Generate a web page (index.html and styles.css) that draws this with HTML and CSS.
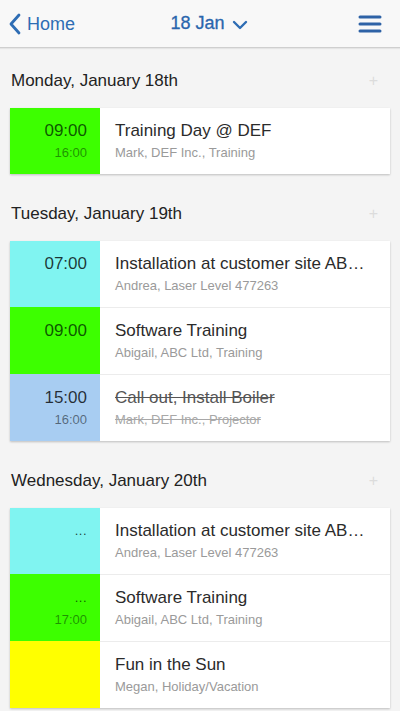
FILE: index.html
```html
<!DOCTYPE html>
<html>
<head>
<meta charset="utf-8">
<link rel="stylesheet" href="styles.css">
</head>
<body>
<header class="topbar">
  <div class="back">
    <svg class="back-icon" width="14" height="24" viewBox="0 0 14 24"><path d="M11 3 L3 12 L11 21" fill="none" stroke="#2e6db4" stroke-width="2.8" stroke-linecap="round" stroke-linejoin="round"/></svg>
    <span>Home</span>
  </div>
  <div class="title">
    <span>18 Jan</span>
    <svg class="down-icon" width="16" height="10" viewBox="0 0 16 10"><path d="M2 2 L8 8 L14 2" fill="none" stroke="#2e6db4" stroke-width="2.4" stroke-linecap="round" stroke-linejoin="round"/></svg>
  </div>
  <div class="menu">
    <svg width="24" height="18" viewBox="0 0 24 18"><g stroke="#2e62a6" stroke-width="3" stroke-linecap="round"><line x1="2" y1="2" x2="22" y2="2"/><line x1="2" y1="9" x2="22" y2="9"/><line x1="2" y1="16" x2="22" y2="16"/></g></svg>
  </div>
</header>

<main class="list">
  <section class="day">
    <div class="day-head"><span>Monday, January 18th</span><span class="plus">+</span></div>
    <div class="card">
      <div class="row">
        <div class="time green"><div class="start">09:00</div><div class="end">16:00</div></div>
        <div class="info"><div class="name">Training Day @ DEF</div><div class="sub">Mark, DEF Inc., Training</div></div>
      </div>
    </div>
  </section>

  <section class="day">
    <div class="day-head"><span>Tuesday, January 19th</span><span class="plus">+</span></div>
    <div class="card">
      <div class="row">
        <div class="time cyan"><div class="start">07:00</div><div class="end"></div></div>
        <div class="info"><div class="name">Installation at customer site AB…</div><div class="sub">Andrea, Laser Level 477263</div></div>
      </div>
      <div class="row">
        <div class="time green"><div class="start">09:00</div><div class="end"></div></div>
        <div class="info"><div class="name">Software Training</div><div class="sub">Abigail, ABC Ltd, Training</div></div>
      </div>
      <div class="row done">
        <div class="time blue"><div class="start">15:00</div><div class="end">16:00</div></div>
        <div class="info"><div class="name">Call out, Install Boiler</div><div class="sub">Mark, DEF Inc., Projector</div></div>
      </div>
    </div>
  </section>

  <section class="day">
    <div class="day-head"><span>Wednesday, January 20th</span><span class="plus">+</span></div>
    <div class="card">
      <div class="row">
        <div class="time cyan"><div class="start dots">...</div><div class="end"></div></div>
        <div class="info"><div class="name">Installation at customer site AB…</div><div class="sub">Andrea, Laser Level 477263</div></div>
      </div>
      <div class="row">
        <div class="time green"><div class="start dots">...</div><div class="end">17:00</div></div>
        <div class="info"><div class="name">Software Training</div><div class="sub">Abigail, ABC Ltd, Training</div></div>
      </div>
      <div class="row">
        <div class="time yellow"><div class="start"></div><div class="end"></div></div>
        <div class="info"><div class="name">Fun in the Sun</div><div class="sub">Megan, Holiday/Vacation</div></div>
      </div>
    </div>
  </section>
</main>
</body>
</html>
```

FILE: styles.css
```css
* { box-sizing: border-box; }
html, body {
  margin: 0;
  padding: 0;
  background: #f4f4f4;
  font-family: "Liberation Sans", Arial, sans-serif;
  overflow: hidden;
}
.topbar {
  height: 48px;
  background: #f8f8f8;
  border-bottom: 1px solid #cfcfcf;
  box-shadow: 0 1px 1px rgba(0,0,0,0.06);
  display: flex;
  align-items: center;
  justify-content: space-between;
  padding: 0 18px 0 8px;
  color: #2e6db4;
  font-size: 18px;
}
.back {
  display: flex;
  align-items: center;
  gap: 5px;
  width: 120px;
}
.back span { padding-top: 1px; }
.title {
  display: flex;
  align-items: center;
  gap: 7px;
  margin-left: 28px;
  color: #2a66ad;
  -webkit-text-stroke: 0.3px #2a66ad;
}
.down-icon { margin-top: 2px; }
.menu {
  width: 120px;
  display: flex;
  justify-content: flex-end;
}
.menu svg { display: block; }
.list { padding: 0; }
.day { margin-bottom: 7px; }
.day-head {
  display: flex;
  justify-content: space-between;
  align-items: center;
  padding: 19px 22px 13px 11px;
  line-height: 28px;
  font-size: 17px;
  color: #222;
}
.plus {
  color: #dcdcdc;
  font-size: 16px;
  font-weight: 300;
}
.card {
  margin: 0 10px;
  background: #fff;
  box-shadow: 0 1px 2px rgba(0,0,0,0.22);
}
.row {
  display: flex;
  height: 67px;
}
.row:first-child { height: 66px; }
.row + .row .info { border-top: 1px solid #ececec; }
.time {
  width: 90px;
  flex: none;
  text-align: right;
  padding: 13px 13px 0 0;
}
.row + .row .time { padding-top: 14px; }
.start {
  font-size: 17px;
  line-height: 20px;
  color: rgba(0,0,0,0.78);
}
.end {
  font-size: 13px;
  line-height: 16px;
  margin-top: 4px;
  color: rgba(0,0,0,0.5);
}
.dots { font-size: 13px; letter-spacing: 0.5px; }
.green { background: #3dff00; }
.green .start { color: rgba(0,40,0,0.78); }
.green .end { color: rgba(0,40,0,0.5); }
.cyan { background: #80f4f1; }
.blue { background: #a8cdf2; }
.yellow { background: #ffff00; }
.info {
  flex: 1;
  min-width: 0;
  padding: 13px 20px 0 15px;
}
.name {
  font-size: 17px;
  line-height: 20px;
  color: #2b2b2b;
  white-space: nowrap;
}
.sub {
  font-size: 13px;
  line-height: 16px;
  margin-top: 4px;
  color: #9a9a9a;
  white-space: nowrap;
}
.done .name { text-decoration: line-through; color: #555; }
.done .sub { text-decoration: line-through; color: #a8a8a8; }
```
